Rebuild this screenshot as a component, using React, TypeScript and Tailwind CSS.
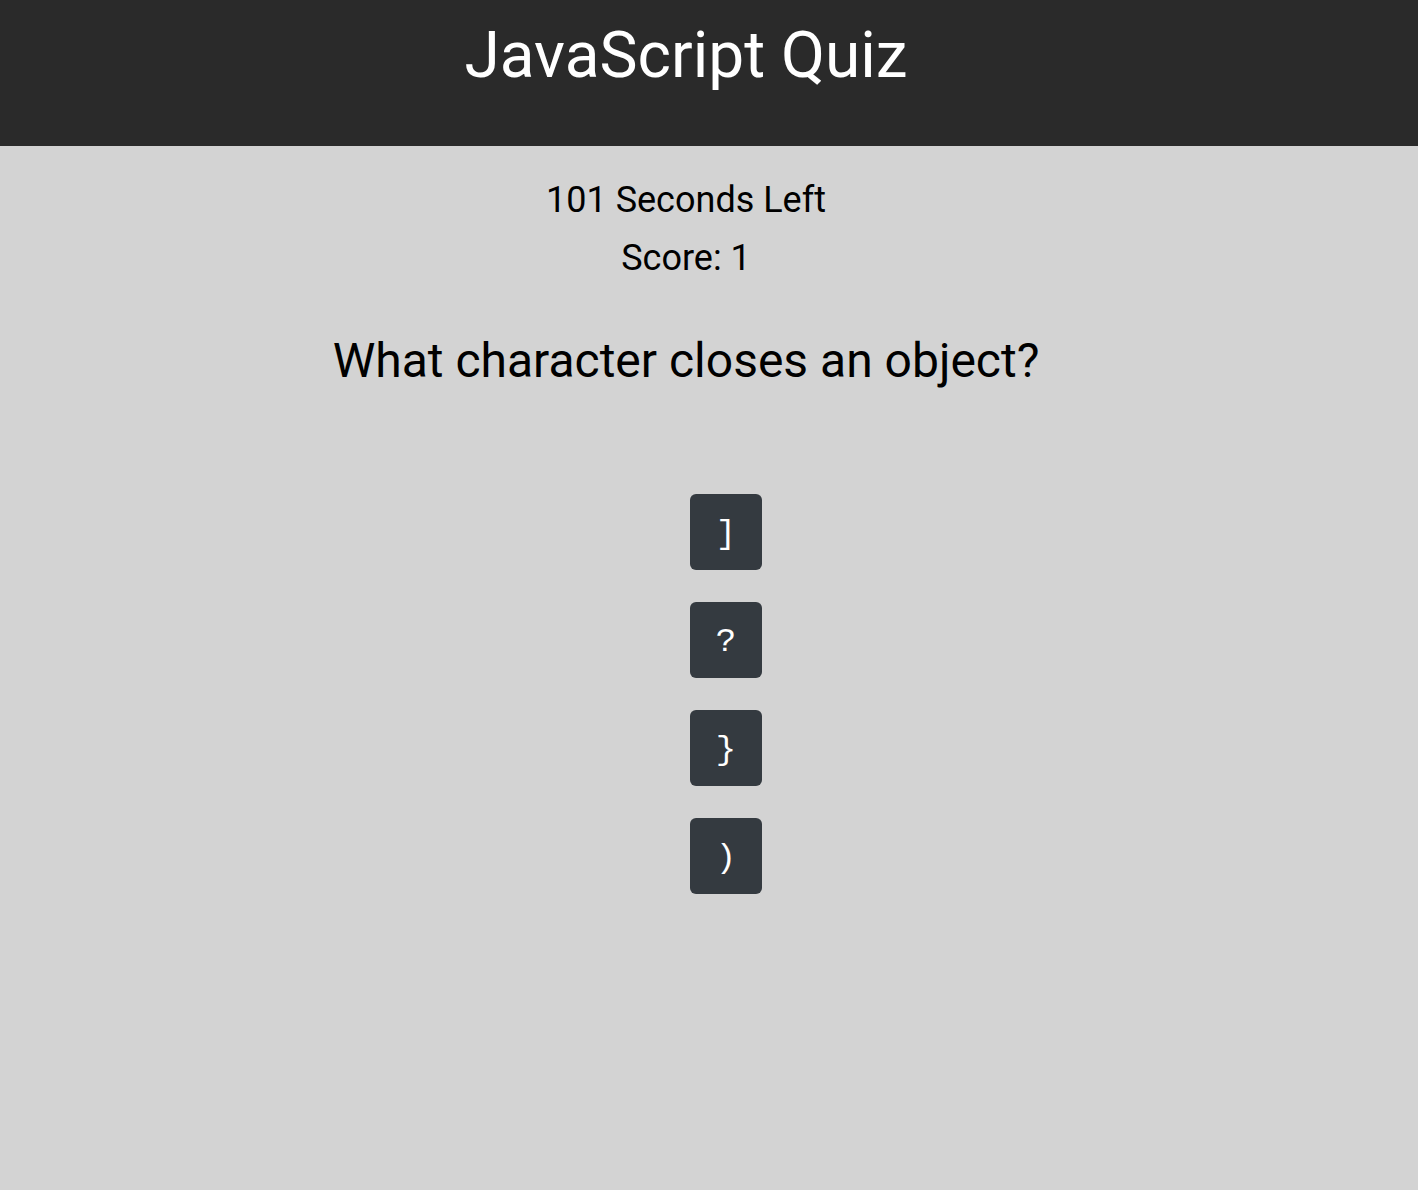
const choices = [']', '?', '}', ')'];

export default function App() {
  return (
    <div className="min-h-[1190px] bg-[#d3d3d3] font-['Roboto',sans-serif]">
      <header className="h-[146px] bg-[#2a2a2a] pt-[16px] pr-[46px] text-center">
        <h1 className="text-[64px] leading-[80px] text-white">JavaScript Quiz</h1>
      </header>
      <main className="flex flex-col items-center pt-[34px] text-black">
        <div className="flex flex-col items-center pr-[46px]">
          <p className="text-[36px] leading-[40px]">101 Seconds Left</p>
          <p className="mt-[18px] text-[36px] leading-[40px]">Score: 1</p>
          <h2 className="mt-[55px] text-[48px] leading-[56px]">What character closes an object?</h2>
        </div>
        <ul className="mt-[105px] ml-[34px] flex flex-col gap-[32px]">
          {choices.map((c) => (
            <li key={c}>
              <button className="flex h-[76px] w-[72px] items-center justify-center rounded-md bg-[#343a40] pt-[4px] font-mono text-[34px] leading-none text-white">
                {c}
              </button>
            </li>
          ))}
        </ul>
      </main>
    </div>
  );
}
